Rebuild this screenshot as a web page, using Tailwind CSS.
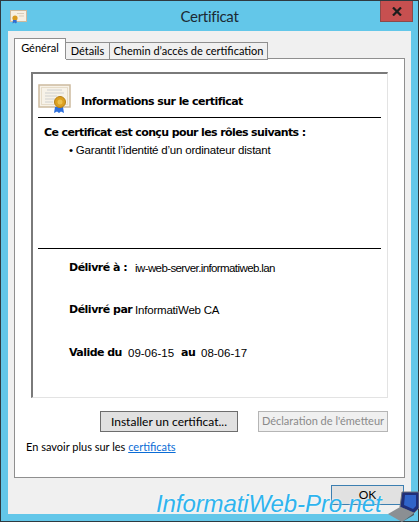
<!DOCTYPE html>
<html lang="fr">
<head>
  <meta charset="UTF-8">
  <title>Certificat</title>
  <script src="https://cdn.jsdelivr.net/npm/@tailwindcss/browser@4"></script>
</head>
<body class="w-[419px] h-[522px] overflow-hidden font-['Lato',sans-serif] text-black">
  <div class="relative w-[419px] h-[522px] bg-[#63c7e9] border border-[#2f3a40] flex flex-col">
    <!-- title bar -->
    <div class="h-[30px] shrink-0 flex items-start relative">
      <svg class="absolute left-[9px] top-[9px]" width="17" height="14" viewBox="0 0 17 14">
        <rect x="0.5" y="0.5" width="16" height="11" fill="#f6efe2" stroke="#cdb99c"/>
        <path d="M7 3.500h7M9 6h5" stroke="#d8cdbb"/>
        <circle cx="5" cy="8" r="2.600" fill="#d99a1e"/>
        <path d="M3 10l-.5 3.500 2-1 1 1 1-1 .5 1-.5-3.500z" fill="#2f6fd0"/>
      </svg>
      <div class="w-full text-center text-[15px] tracking-[-0.3px] leading-[30px] text-[#1c2a33]">Certificat</div>
      <div class="absolute left-[379px] top-0 w-[33px] h-[21px] bg-[#c75050] border border-t-0 border-[#8c4a4a] flex items-center justify-center">
        <svg width="10" height="9" viewBox="0 0 10 9"><path d="M1 .5l8 8M9 .5l-8 8" stroke="#1d1d1d" stroke-width="2.200"/></svg>
      </div>
    </div>

    <!-- client area -->
    <div class="ml-[7px] w-[403px] h-[483px] bg-[#f0f0f0] px-[6px] pt-[7px] flex flex-col">
      <!-- tabs -->
      <div class="flex items-end h-[21px] text-[11px] relative z-10">
        <div class="w-[52px] h-[21px] bg-white border border-b-0 border-[#8f8f8f] flex items-center justify-center pb-[2px]">Général</div>
        <div class="w-[44px] h-[18px] -mb-px bg-[#f0f0f0] border border-[#8f8f8f] border-l-0 flex items-center justify-center">Détails</div>
        <div class="w-[158px] h-[18px] -mb-px bg-[#f0f0f0] border border-[#8f8f8f] border-l-0 flex items-center justify-center whitespace-nowrap">Chemin d’accès de certification</div>
      </div>

      <!-- tab panel -->
      <div class="w-[391px] h-[420px] -mt-px bg-white border border-[#8f8f8f] pl-[16px] pt-[13px] flex flex-col">
        <!-- inner box -->
        <div class="w-[357px] h-[326px] border-2 border-r border-b border-t-[#7a7a7a] border-l-[#7a7a7a] border-r-[#e3e3e3] border-b-[#e3e3e3] pl-[5px] flex flex-col">
          <div class="h-[44px] w-[343px] border-b border-black flex items-end relative shrink-0">
            <svg class="absolute left-0 top-[10px]" width="34" height="30" viewBox="0 0 34 30">
              <rect x="1" y="1" width="31" height="22" fill="#f7f2e8" stroke="#cdbb9f" stroke-width="1.500"/>
              <rect x="3.500" y="3.500" width="26" height="17" fill="none" stroke="#e6dcc9"/>
              <path d="M9 6h15M7 9h19M7 12h12M7 15h10M7 18h8" stroke="#cfd0cf"/>
              <path d="M17 23l-1 6 3-1.500 2 1.500 2-1.500 3 1.500-1-6z" fill="#2d6fdc"/>
              <circle cx="22" cy="18" r="5.500" fill="#dba021" stroke="#b77f14"/>
              <circle cx="22" cy="18" r="2.500" fill="#edc04c"/>
            </svg>
            <div class="ml-[43px] mb-[8px] text-[11px] font-bold leading-[14px] font-['DejaVu_Sans',sans-serif] tracking-[-0.55px]">Informations sur le certificat</div>
          </div>
          <div class="h-[131px] w-[343px] border-b border-black pl-[6px] pt-[8px] shrink-0 text-[11px]">
            <div class="font-bold leading-[14px] tracking-[-0.62px] font-['DejaVu_Sans',sans-serif]">Ce certificat est conçu pour les rôles suivants :</div>
            <div class="pl-[25px] mt-[3px] leading-[14px] text-[11.5px] tracking-[-0.2px] font-['Liberation_Sans',sans-serif]">• Garantit l’identité d’un ordinateur distant</div>
          </div>
          <div class="text-[11.5px] leading-[14px] font-['Liberation_Sans',sans-serif]">
            <div class="flex mt-[12px] pl-[31px]"><b class="w-[66px] text-[11px] tracking-[-0.5px] font-['DejaVu_Sans',sans-serif]">Délivré à :</b><span class="tracking-[-0.6px]">iw-web-server.informatiweb.lan</span></div>
            <div class="flex mt-[28px] pl-[31px]"><b class="w-[66px] text-[11px] tracking-[-0.5px] whitespace-nowrap font-['DejaVu_Sans',sans-serif]">Délivré par</b><span class="tracking-[-0.2px]">InformatiWeb CA</span></div>
            <div class="flex mt-[29px] pl-[31px] whitespace-nowrap"><b class="w-[59px] text-[11px] tracking-[-0.55px] font-['DejaVu_Sans',sans-serif]">Valide du</b><span class="w-[53px]">09-06-15</span><b class="w-[20px] text-[11px] tracking-[-0.5px] font-['DejaVu_Sans',sans-serif]">au</b><span>08-06-17</span></div>
          </div>
        </div>

        <!-- buttons -->
        <div class="flex mt-[13px] ml-[69px] gap-[20px] text-[12px]">
          <div class="w-[138px] h-[21px] bg-[#e1e1e1] border border-[#6d6d6d] flex items-center justify-center">Installer un certificat...</div>
          <div class="w-[130px] h-[21px] bg-[#f0f0f0] border border-[#b5b5b5] text-[#8a8a8a] text-[11px] flex items-center justify-center whitespace-nowrap">Déclaration de l'émetteur</div>
        </div>
        <div class="mt-[7px] -ml-[5px] text-[11px] leading-[16px]">En savoir plus sur les <a class="text-[#0a6cd6] underline">certificats</a></div>
      </div>

      <!-- dialog footer -->
      <div class="flex justify-end mt-[7px]">
        <div class="w-[73px] h-[20px] mr-[1px] bg-[#e1e1e1] border border-[#3c7fb1] flex items-center justify-center text-[12px]">OK</div>
      </div>
    </div>

    <!-- watermark -->
    <div class="absolute left-[155px] top-[488px] text-[24px] leading-[30px] italic font-['Liberation_Sans',sans-serif] text-[#2fb4ee] whitespace-nowrap tracking-[-0.1px] [text-shadow:0_0_2px_white]">InformatiWeb-Pro.net</div>
    <svg class="absolute left-[385px] top-[489px]" width="33" height="32" viewBox="0 0 33 32">
      <path d="M16 2h17v16l-5 5-14-6z" fill="#1f2f78" stroke="#6f747c"/>
      <path d="M19 5h11v11l-3 3-9-4z" fill="#2f64c9"/>
      <path d="M2 24l12-7 14 6-12 9z" fill="#8b8f93"/>
      <path d="M2 24l14 8 12-9v2l-12 7z" fill="#565a5e"/>
    </svg>
  </div>
</body>
</html>
